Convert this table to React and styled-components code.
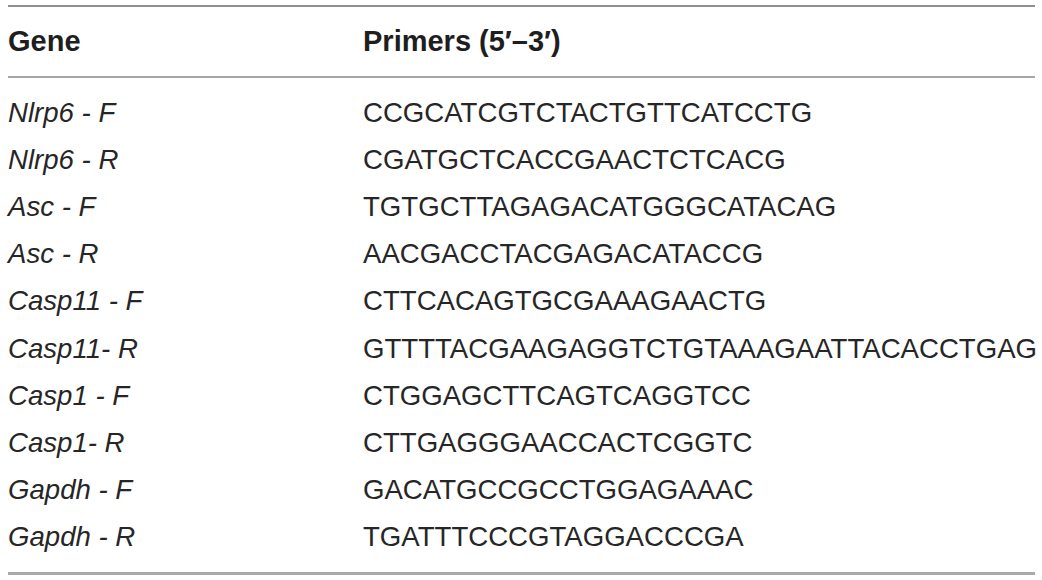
import React from "react";
import styled, { createGlobalStyle } from "styled-components";

const rows = [
  { gene: "Nlrp6 - F", primer: "CCGCATCGTCTACTGTTCATCCTG" },
  { gene: "Nlrp6 - R", primer: "CGATGCTCACCGAACTCTCACG" },
  { gene: "Asc - F", primer: "TGTGCTTAGAGACATGGGCATACAG" },
  { gene: "Asc - R", primer: "AACGACCTACGAGACATACCG" },
  { gene: "Casp11 - F", primer: "CTTCACAGTGCGAAAGAACTG" },
  { gene: "Casp11- R", primer: "GTTTTACGAAGAGGTCTGTAAAGAATTACACCTGAG" },
  { gene: "Casp1 - F", primer: "CTGGAGCTTCAGTCAGGTCC" },
  { gene: "Casp1- R", primer: "CTTGAGGGAACCACTCGGTC" },
  { gene: "Gapdh - F", primer: "GACATGCCGCCTGGAGAAAC" },
  { gene: "Gapdh - R", primer: "TGATTTCCCGTAGGACCCGA" },
];

const App = () => {
  return (
    <>
      <GlobalStyle />
      <Page>
        <Table>
          <HeaderRow>
            <HeadCell>Gene</HeadCell>
            <HeadCell>Primers (5′–3′)</HeadCell>
          </HeaderRow>
          <Body>
            {rows.map(({ gene, primer }) => (
              <Row key={gene}>
                <GeneCell>{gene}</GeneCell>
                <Cell>{primer}</Cell>
              </Row>
            ))}
          </Body>
        </Table>
      </Page>
    </>
  );
};

export default App;

const GlobalStyle = createGlobalStyle`
  html, body {
    margin: 0;
    padding: 0;
    background: #ffffff;
    font-family: "Liberation Sans", Arial, sans-serif;
    color: #262626;
  }
`;

const Page = styled.div`
  padding: 5px 0 0 8px;
  width: 1027px;
`;

const Table = styled.div`
  border-bottom: 3px solid #a9a9a9;
`;

const HeaderRow = styled.div`
  display: grid;
  grid-template-columns: 355px 1fr;
  align-items: center;
  height: 69px;
  border-top: 2px solid #8f8f8f;
  border-bottom: 2px solid #a6a6a6;
`;

const HeadCell = styled.div`
  font-size: 29px;
  font-weight: 700;
  color: #1e1e1e;
  white-space: nowrap;
`;

const Body = styled.div`
  padding: 11px 0 11px;
`;

const Row = styled.div`
  display: grid;
  grid-template-columns: 355px 1fr;
  align-items: center;
  height: 47.2px;
`;

const Cell = styled.div`
  font-size: 27.6px;
  white-space: nowrap;
`;

const GeneCell = styled(Cell)`
  font-style: italic;
`;
